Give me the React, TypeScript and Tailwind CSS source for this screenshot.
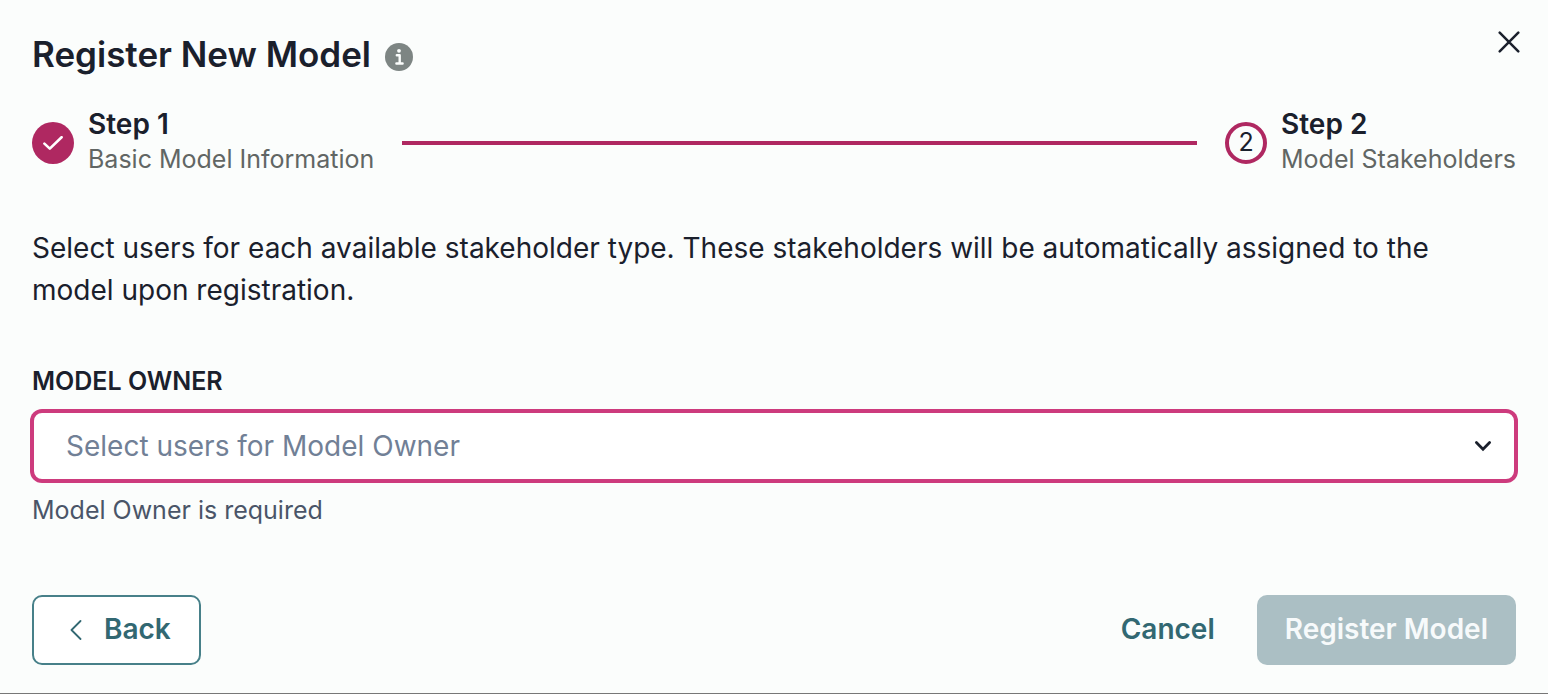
import React from "react";

function InfoIcon() {
  return (
    <svg viewBox="0 0 28 28" className="size-7" aria-hidden="true">
      <circle cx="14" cy="14" r="14" fill="#7d8583" />
      <circle cx="14" cy="7.8" r="1.9" fill="#fbfdfc" />
      <path d="M11.8 12.200h2.900v8M11.400 20.500h6.200" fill="none" stroke="#fbfdfc" strokeWidth="2.400" strokeLinecap="round" strokeLinejoin="round" />
    </svg>
  );
}

function CloseIcon() {
  return (
    <svg viewBox="0 0 22 22" className="size-[22px]" aria-hidden="true">
      <path d="M1.700 1.700l18.600 18.600M20.300 1.700l-18.600 18.600" fill="none" stroke="#1a202c" strokeWidth="2.500" strokeLinecap="round" />
    </svg>
  );
}

function CheckIcon() {
  return (
    <svg viewBox="0 0 20 14" className="h-3.5 w-5" aria-hidden="true">
      <path d="M1.400 7.600l5.400 5L18.600 1.200" fill="none" stroke="#fff" strokeWidth="2.600" strokeLinecap="round" strokeLinejoin="round" />
    </svg>
  );
}

type StepProps = { marker: React.ReactNode; done?: boolean; title: string; detail: string };

function Step({ marker, done, title, detail }: StepProps) {
  return (
    <li className="flex shrink-0 items-center gap-3.5">
      <span
        className={
          done
            ? "flex size-[42px] items-center justify-center rounded-full bg-[#af2861]"
            : "flex size-[42px] items-center justify-center rounded-full border-4 border-[#af2861] text-[25px]"
        }
      >
        {marker}
      </span>
      <div className="pb-1">
        <h2 className="text-[28px] leading-[36px] font-semibold">{title}</h2>
        <p className="text-[25px] leading-[34px] text-[#616664]">{detail}</p>
      </div>
    </li>
  );
}

export default function App() {
  return (
    <main
      role="dialog"
      aria-labelledby="dialog-title"
      className="border-b border-[#777] bg-[#fbfdfc] px-8 pt-7 pb-7 font-['Inter',sans-serif] text-[#1a202c]"
    >
      <header className="flex items-start justify-between">
        <div className="flex items-center gap-3.5">
          <h1 id="dialog-title" className="text-[35px] leading-[52px] font-semibold">
            Register New Model
          </h1>
          <button type="button" aria-label="More information" className="mt-1.5">
            <InfoIcon />
          </button>
        </div>
        <button type="button" aria-label="Close" className="-mr-1 mt-[3px]">
          <CloseIcon />
        </button>
      </header>

      <ol className="mt-[26px] flex items-center gap-7">
        <Step done marker={<CheckIcon />} title="Step 1" detail="Basic Model Information" />
        <li aria-hidden="true" className="h-1 flex-1 bg-[#af2861]" />
        <Step marker="2" title="Step 2" detail="Model Stakeholders" />
      </ol>

      <p className="mt-[47px] text-[28px] leading-[42px]">
        Select users for each available stakeholder type. These stakeholders will be automatically assigned to the model upon
        registration.
      </p>

      <form>
        <label htmlFor="owner" className="mt-[52px] block text-[25px] leading-[36px] font-semibold uppercase">
          Model Owner
        </label>
        <div className="mt-3 grid items-center">
          <select
            id="owner"
            defaultValue=""
            aria-describedby="owner-error"
            className="col-start-1 row-start-1 h-[70px] w-full appearance-none rounded-[10px] border-2 border-[#cd3b7d] bg-white px-8 text-[28px] text-[#718096] ring-2 ring-[#cd3b7d] outline-none"
          >
            <option value="">Select users for Model Owner</option>
          </select>
          <svg viewBox="0 0 18 12" className="pointer-events-none col-start-1 row-start-1 mr-6 h-3 w-[18px] justify-self-end" aria-hidden="true">
            <path d="M2.400 2.600L9 9.200l6.600-6.600" fill="none" stroke="#1a202c" strokeWidth="2.800" strokeLinecap="round" />
          </svg>
        </div>
        <p id="owner-error" className="mt-3 text-[25px] leading-[34px] text-[#4a5568]">
          Model Owner is required
        </p>

        <div className="mt-[68px] flex items-center justify-between text-[28px] font-semibold text-[#326872]">
          <button type="button" className="flex h-[70px] items-center gap-[22px] rounded-[10px] border-2 border-[#478089] bg-white pr-7 pl-9">
            <svg viewBox="0 0 12 20" className="h-5 w-3" aria-hidden="true">
              <path d="M10.500 1L1.500 10l9 9" fill="none" stroke="#326872" strokeWidth="1.800" strokeLinecap="round" strokeLinejoin="round" />
            </svg>
            <span className="pb-0.5">Back</span>
          </button>
          <div className="flex items-center gap-3.5">
            <button type="button" className="h-[70px] px-7 pb-0.5">
              Cancel
            </button>
            <button type="submit" disabled className="h-[70px] rounded-[10px] bg-[#abbfc4] px-7 pb-0.5 text-[#f7fafb]">
              Register Model
            </button>
          </div>
        </div>
      </form>
    </main>
  );
}
